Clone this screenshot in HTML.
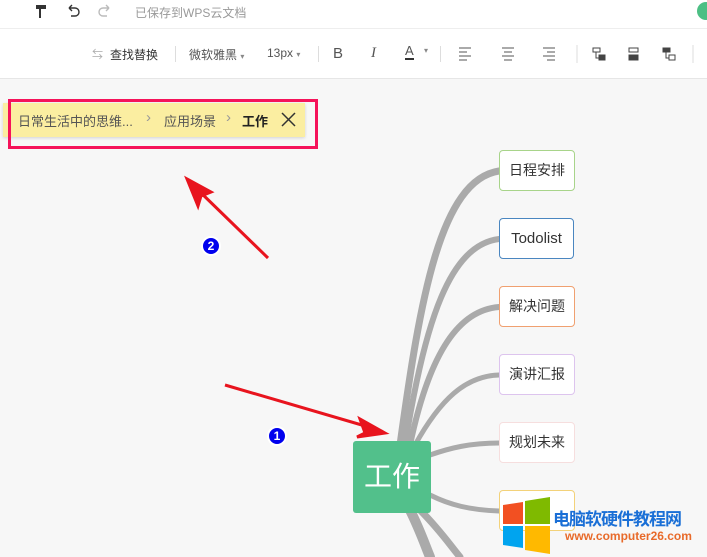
<!DOCTYPE html>
<html><head><meta charset="utf-8"><style>
*{margin:0;padding:0;box-sizing:border-box}
body{width:707px;height:557px;overflow:hidden;background:#f7f7f7;font-family:"Liberation Sans","Noto Sans CJK SC",sans-serif;position:relative}
.a{position:absolute}
.top{left:0;top:0;width:707px;height:28px;background:#fff}
.tb{left:0;top:28px;width:707px;height:51px;background:#fff;border-top:1px solid #eee;border-bottom:1px solid #e6e6e6}
.t{font-size:12px;color:#333;white-space:nowrap}
.sep{width:1px;height:16px;background:#ddd;top:46px}
.node{left:499px;width:76px;height:41px;background:#fff;border:1px solid;border-radius:4px;font-size:14px;color:#333;text-align:center;line-height:39px}
</style></head><body>
<div class="a top"></div>
<svg class="a" style="left:34px;top:3px" width="90" height="18" viewBox="0 0 90 18">
<path d="M2 2h10v4H7v9H5V6H2z" fill="#333"/>
<path d="M35 5h6a4 4 0 010 8h-4M35 5l3-3M35 5l3 3" stroke="#333" stroke-width="1.4" fill="none"/>
<path d="M75 5h-6a4 4 0 000 8h4M75 5l-3-3M75 5l-3 3" stroke="#bbb" stroke-width="1.4" fill="none"/>
</svg>
<div class="a t" style="left:135px;top:4px;color:#999">已保存到WPS云文档</div>
<div class="a" style="left:697px;top:2px;width:18px;height:18px;border-radius:50%;background:#4cbf84"></div>
<div class="a tb"></div>
<div class="a t" style="left:92px;top:46px;color:#aaa;font-size:11px">⇆</div>
<div class="a t" style="left:110px;top:46px">查找替换</div>
<div class="a sep" style="left:175px"></div>
<div class="a t" style="left:189px;top:46px;color:#555">微软雅黑 <span style="font-size:8px;color:#888">▾</span></div>
<div class="a t" style="left:267px;top:46px;color:#555">13px <span style="font-size:8px;color:#888">▾</span></div>
<div class="a sep" style="left:318px"></div>
<div class="a t" style="left:333px;top:45px;font-size:15px;color:#555">B</div>
<div class="a t" style="left:371px;top:45px;font-size:15px;font-style:italic;color:#555;font-family:'Liberation Serif',serif">I</div>
<div class="a t" style="left:405px;top:44px;font-size:13px;color:#555;border-bottom:2px solid #333;line-height:14px">A</div>
<div class="a t" style="left:424px;top:46px;font-size:8px;color:#888">▾</div>
<div class="a sep" style="left:440px"></div>
<svg class="a" style="left:456px;top:45px" width="240" height="18">
<g stroke="#555" stroke-width="1"><path d="M3 3h12M3 7h8M3 11h12M3 15h8"/><path d="M46 3h12M48 7h8M46 11h12M48 15h8"/><path d="M87 3h12M91 7h8M87 11h12M91 15h8"/></g>
<line x1="121" y1="0" x2="121" y2="18" stroke="#ddd"/>
<g stroke="#444" fill="none"><rect x="137" y="3" width="7" height="4"/><path d="M140 7v6h3"/><rect x="143" y="10" width="6" height="5" fill="#444"/>
<rect x="173" y="3" width="9" height="4"/><rect x="173" y="10" width="9" height="5" fill="#444"/>
<rect x="207" y="3" width="7" height="4" fill="#444"/><path d="M210 7v6h3"/><rect x="213" y="10" width="6" height="5"/></g>
<line x1="237" y1="0" x2="237" y2="18" stroke="#ddd"/>
</svg>
<div class="a" style="left:3px;top:103px;width:302px;height:34px;background:#fbeea1;box-shadow:0 1px 3px rgba(0,0,0,.15)"></div>
<div class="a t" style="left:18px;top:111px;font-size:13px;color:#555">日常生活中的思维...</div>
<div class="a t" style="left:146px;top:109px;font-size:15px;color:#999">›</div>
<div class="a t" style="left:164px;top:111px;font-size:13px;color:#555">应用场景</div>
<div class="a t" style="left:226px;top:109px;font-size:15px;color:#999">›</div>
<div class="a t" style="left:242px;top:111px;font-size:13px;font-weight:bold;color:#222">工作</div>
<svg class="a" style="left:281px;top:112px" width="15" height="15"><path d="M1 1L14 14M14 1L1 14" stroke="#333" stroke-width="1.5"/></svg>
<div class="a" style="left:8px;top:99px;width:310px;height:50px;border:3px solid #f5135a"></div>
<svg class="a" style="left:0;top:0" width="707" height="557">
<g fill="none" stroke="#aaa" stroke-linecap="round">
<path d="M400 445C420 300 440 180 499 171" stroke-width="7"/>
<path d="M405 445C425 320 450 245 499 239" stroke-width="6"/>
<path d="M410 445C430 350 460 310 499 307" stroke-width="6"/>
<path d="M415 445C440 400 465 376 499 375" stroke-width="5"/>
<path d="M430 455C450 448 470 443 499 443" stroke-width="5"/>
<path d="M430 495C450 505 470 510 499 511" stroke-width="5"/>
<path d="M410 510C420 530 425 545 430 557" stroke-width="10"/>
<path d="M420 510C440 530 450 545 460 557" stroke-width="7"/>
</g>
<g stroke="#e8141e" stroke-width="3" fill="#e8141e">
<line x1="225" y1="385" x2="372" y2="428"/><path d="M385 433L360 419L365 433L357 437z"/>
<line x1="268" y1="258" x2="197" y2="189"/><path d="M187 179L211 192L201 196L198 206z"/>
</g>
<g font-family="Liberation Sans" font-weight="bold" font-size="12" fill="#fff" text-anchor="middle">
<circle cx="211" cy="246" r="9" fill="#0000ee" stroke="#fff" stroke-width="2"/><text x="211" y="250">2</text>
<circle cx="277" cy="436" r="9" fill="#0000ee" stroke="#fff" stroke-width="2"/><text x="277" y="440">1</text>
</g>
</svg>
<div class="a" style="left:353px;top:441px;width:78px;height:72px;background:#52c08b;border-radius:3px;color:#fff;font-size:28px;text-align:center;line-height:72px">工作</div>
<div class="a node" style="top:150px;border-color:#a8d48a">日程安排</div>
<div class="a node" style="top:218px;border-color:#4a86c0;width:75px;font-size:15px">Todolist</div>
<div class="a node" style="top:286px;border-color:#f0a070">解决问题</div>
<div class="a node" style="top:354px;border-color:#ddc4ee">演讲汇报</div>
<div class="a node" style="top:422px;border-color:#f6dede">规划未来</div>
<div class="a node" style="top:490px;border-color:#f3d27a;height:41px"></div>
<svg class="a" style="left:500px;top:497px" width="60" height="60">
<path d="M3 8l20-3v22H3z" fill="#f25022"/><path d="M25 4l25-4v27H25z" fill="#7fba00"/>
<path d="M3 29h20v22L3 48z" fill="#00a4ef"/><path d="M25 29h25v28l-25-4z" fill="#ffb900"/>
</svg>
<div class="a" style="left:553px;top:505px;font-size:17px;font-weight:bold;color:#1a6fd6;white-space:nowrap;letter-spacing:-1px">电脑软硬件教程网</div>
<div class="a" style="left:565px;top:529px;font-size:12px;font-weight:bold;color:#e86a2a;white-space:nowrap">www.computer26.com</div>
</body></html>
